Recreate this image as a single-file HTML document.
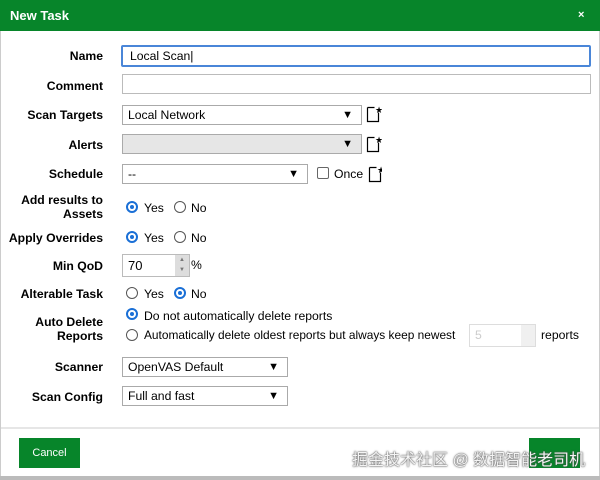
<!DOCTYPE html>
<html><head><meta charset="utf-8"><style>
body{margin:0;width:600px;height:480px;overflow:hidden;background:#fff;font-family:"Liberation Sans",sans-serif;font-size:12.2px;color:#000;position:relative}
.a{position:absolute}
.hd{left:0;top:0;width:600px;height:31px;background:#07852a}
.lb{right:497px;font-weight:bold;text-align:right;line-height:14px}
.in{border:1px solid #bbb;box-sizing:border-box;background:#fff}
.sel{border:1px solid #aaa;box-sizing:border-box;background:#fff;padding-left:5px;line-height:18px}
.sel .ar{position:absolute;right:8px;top:0;font-size:11px}
.r{width:12px;height:12px;border:1px solid #555;border-radius:50%;box-sizing:border-box}
.r.on{border:2px solid #1a6fd6}
.r.on::after{content:"";position:absolute;left:2px;top:2px;width:4px;height:4px;border-radius:50%;background:#1a6fd6}
.t{line-height:14px}
</style></head><body>
<div class="a hd"></div>
<div class="a" style="left:10px;top:8px;color:#fff;font-weight:bold;font-size:13px">New Task</div>
<div class="a" style="left:578px;top:9px;color:#fff;font-weight:bold;font-size:11px">×</div>

<div class="a lb" style="top:49px">Name</div>
<div class="a in" style="left:121px;top:45px;width:470px;height:22px;border:2px solid #4a86d8;border-radius:2px;padding-left:7px;line-height:18px">Local Scan|</div>
<div class="a lb" style="top:79px">Comment</div>
<div class="a in" style="left:122px;top:74px;width:469px;height:20px"></div>

<div class="a lb" style="top:108px">Scan Targets</div>
<div class="a sel" style="left:122px;top:105px;width:240px;height:20px">Local Network<span class="ar">▼</span></div>
<div class="a lb" style="top:138px">Alerts</div>
<div class="a sel" style="left:122px;top:134px;width:240px;height:20px;background:#e6e6e6"><span class="ar">▼</span></div>
<div class="a lb" style="top:167px">Schedule</div>
<div class="a sel" style="left:122px;top:164px;width:186px;height:20px">--<span class="ar">▼</span></div>
<div class="a" style="left:317px;top:167px;width:12px;height:12px;border:1px solid #666;box-sizing:border-box;border-radius:2px"></div>
<div class="a t" style="left:334px;top:167px">Once</div>
<svg class="a" style="left:366px;top:104px" width="16" height="90"><g fill="none" stroke="#000" stroke-width="1.2"><path d="M1.5 3.5v14h11v-9M1.5 3.5h7"/><path d="M1.5 33.5v14h11v-9M1.5 33.5h7"/><path d="M3.5 63.5v14h11v-9M3.5 63.5h7"/></g><g font-size="9" font-family="DejaVu Sans"><text x="9" y="9">★</text><text x="9" y="39">★</text><text x="11" y="69">★</text></g></svg>

<div class="a lb" style="top:193px">Add results to<br>Assets</div>
<div class="a r on" style="left:126px;top:201px"></div><div class="a t" style="left:144px;top:201px">Yes</div>
<div class="a r" style="left:174px;top:201px"></div><div class="a t" style="left:191px;top:201px">No</div>
<div class="a lb" style="top:231px">Apply Overrides</div>
<div class="a r on" style="left:126px;top:231px"></div><div class="a t" style="left:144px;top:231px">Yes</div>
<div class="a r" style="left:174px;top:231px"></div><div class="a t" style="left:191px;top:231px">No</div>
<div class="a lb" style="top:259px">Min QoD</div>
<div class="a in" style="left:122px;top:254px;width:68px;height:23px;padding-left:5px;line-height:21px;font-size:13px">70</div>
<div class="a" style="left:175px;top:255px;width:14px;height:21px;background:#ddd;font-size:6px;color:#777;text-align:center;line-height:10px">▲<br>▼</div>
<div class="a t" style="left:191px;top:258px">%</div>
<div class="a lb" style="top:287px">Alterable Task</div>
<div class="a r" style="left:126px;top:287px"></div><div class="a t" style="left:144px;top:287px">Yes</div>
<div class="a r on" style="left:174px;top:287px"></div><div class="a t" style="left:191px;top:287px">No</div>
<div class="a lb" style="top:315px">Auto Delete<br>Reports</div>
<div class="a r on" style="left:126px;top:308px"></div><div class="a t" style="left:144px;top:309px">Do not automatically delete reports</div>
<div class="a r" style="left:126px;top:329px"></div><div class="a t" style="left:144px;top:328px;font-size:11.9px">Automatically delete oldest reports but always keep newest</div>
<div class="a in" style="left:469px;top:324px;width:67px;height:23px;border-color:#ddd;color:#ccc;padding-left:5px;line-height:21px">5</div>
<div class="a" style="left:521px;top:325px;width:14px;height:21px;background:#f0f0f0"></div>
<div class="a t" style="left:541px;top:328px">reports</div>

<div class="a lb" style="top:360px">Scanner</div>
<div class="a sel" style="left:122px;top:357px;width:166px;height:20px">OpenVAS Default<span class="ar">▼</span></div>
<div class="a lb" style="top:390px">Scan Config</div>
<div class="a sel" style="left:122px;top:386px;width:166px;height:20px">Full and fast<span class="ar">▼</span></div>

<div class="a" style="left:0;top:427px;width:600px;height:2px;background:#e6e6e6"></div>
<div class="a" style="left:19px;top:438px;width:61px;height:30px;background:#07852a;color:#fff;font-size:11px;text-align:center;line-height:30px">Cancel</div>
<div class="a" style="left:529px;top:438px;width:51px;height:30px;background:#07852a"></div>
<div class="a" style="left:352px;top:446px;color:#f4f4f4;font-size:16px;font-family:'Liberation Sans','Noto Sans CJK SC',sans-serif;text-shadow:0 0 2px #555,0 0 1px #333">掘金技术社区 @ 数据智能老司机</div>
<div class="a" style="left:0;top:476px;width:600px;height:4px;background:#bbb"></div>
<div class="a" style="left:0;top:31px;width:1px;height:445px;background:#ccc"></div>
<div class="a" style="left:599px;top:31px;width:1px;height:445px;background:#ccc"></div>
</body></html>
